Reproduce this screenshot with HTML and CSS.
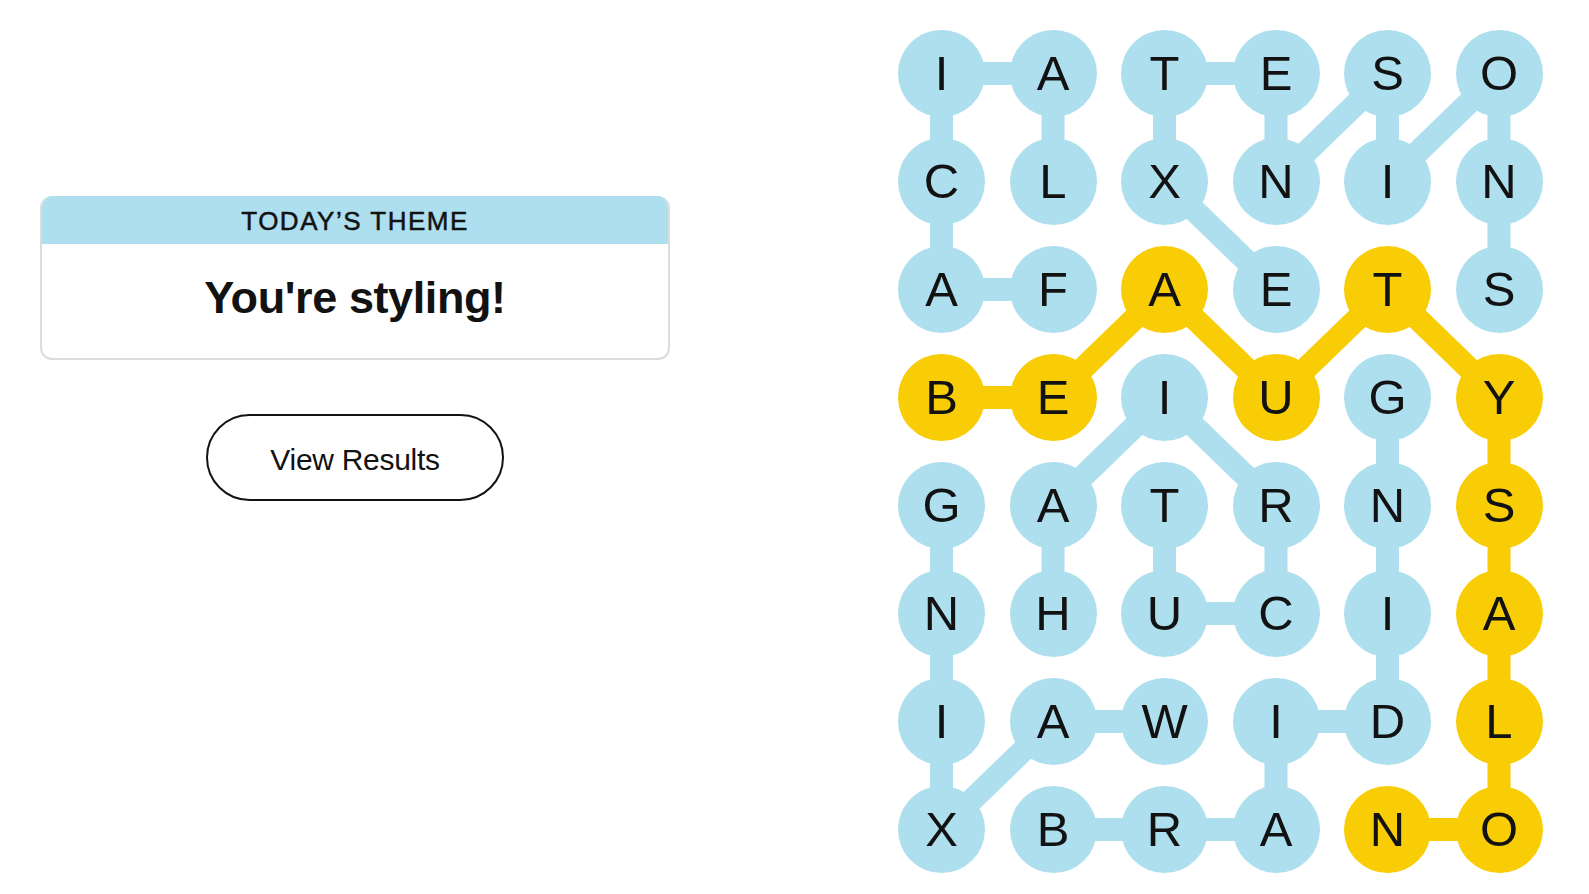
FILE: index.html
```html
<!DOCTYPE html>
<html lang="en">
<head>
<meta charset="utf-8">
<title>Strands</title>
<link rel="stylesheet" href="styles.css">
</head>
<body>
<main class="page">
  <section class="side">
    <div class="theme-card">
      <div class="theme-head">TODAY’S THEME</div>
      <div class="theme-body">You're styling!</div>
    </div>
    <button class="results-btn" type="button">View Results</button>
  </section>

  <section class="board">
    <svg class="links" width="645" height="843" viewBox="0 0 645 843" aria-hidden="true">
      <g class="blue">
        <!-- FACIAL -->
        <line x1="43.5" y1="43.5" x2="155" y2="43.5"/>
        <line x1="43.5" y1="43.5" x2="43.5" y2="151.5"/>
        <line x1="43.5" y1="151.5" x2="43.5" y2="259.5"/>
        <line x1="43.5" y1="259.5" x2="155" y2="259.5"/>
        <line x1="155" y1="43.5" x2="155" y2="151.5"/>
        <!-- EXTENSIONS -->
        <line x1="266.5" y1="43.5" x2="378" y2="43.5"/>
        <line x1="266.5" y1="43.5" x2="266.5" y2="151.5"/>
        <line x1="266.5" y1="151.5" x2="378" y2="259.5"/>
        <line x1="378" y1="43.5" x2="378" y2="151.5"/>
        <line x1="378" y1="151.5" x2="489.5" y2="43.5"/>
        <line x1="489.5" y1="43.5" x2="489.5" y2="151.5"/>
        <line x1="489.5" y1="151.5" x2="601" y2="43.5"/>
        <line x1="601" y1="43.5" x2="601" y2="151.5"/>
        <line x1="601" y1="151.5" x2="601" y2="259.5"/>
        <!-- HAIRCUT -->
        <line x1="266.5" y1="367.5" x2="155" y2="475.5"/>
        <line x1="266.5" y1="367.5" x2="378" y2="475.5"/>
        <line x1="155" y1="475.5" x2="155" y2="583.5"/>
        <line x1="266.5" y1="475.5" x2="266.5" y2="583.5"/>
        <line x1="266.5" y1="583.5" x2="378" y2="583.5"/>
        <line x1="378" y1="475.5" x2="378" y2="583.5"/>
        <!-- BRAIDING -->
        <line x1="489.5" y1="367.5" x2="489.5" y2="475.5"/>
        <line x1="489.5" y1="475.5" x2="489.5" y2="583.5"/>
        <line x1="489.5" y1="583.5" x2="489.5" y2="691.5"/>
        <line x1="489.5" y1="691.5" x2="378" y2="691.5"/>
        <line x1="378" y1="691.5" x2="378" y2="799.5"/>
        <line x1="378" y1="799.5" x2="266.5" y2="799.5"/>
        <line x1="266.5" y1="799.5" x2="155" y2="799.5"/>
        <!-- WAXING -->
        <line x1="43.5" y1="475.5" x2="43.5" y2="583.5"/>
        <line x1="43.5" y1="583.5" x2="43.5" y2="691.5"/>
        <line x1="43.5" y1="691.5" x2="43.5" y2="799.5"/>
        <line x1="43.5" y1="799.5" x2="155" y2="691.5"/>
        <line x1="155" y1="691.5" x2="266.5" y2="691.5"/>
      </g>
      <g class="gold">
        <!-- BEAUTYSALON -->
        <line x1="43.5" y1="367.5" x2="155" y2="367.5"/>
        <line x1="155" y1="367.5" x2="266.5" y2="259.5"/>
        <line x1="266.5" y1="259.5" x2="378" y2="367.5"/>
        <line x1="378" y1="367.5" x2="489.5" y2="259.5"/>
        <line x1="489.5" y1="259.5" x2="601" y2="367.5"/>
        <line x1="601" y1="367.5" x2="601" y2="475.5"/>
        <line x1="601" y1="475.5" x2="601" y2="583.5"/>
        <line x1="601" y1="583.5" x2="601" y2="691.5"/>
        <line x1="601" y1="691.5" x2="601" y2="799.5"/>
        <line x1="601" y1="799.5" x2="489.5" y2="799.5"/>
      </g>
    </svg>
    <div class="grid">
      <span class="cell">I</span><span class="cell">A</span><span class="cell">T</span><span class="cell">E</span><span class="cell">S</span><span class="cell">O</span>
      <span class="cell">C</span><span class="cell">L</span><span class="cell">X</span><span class="cell">N</span><span class="cell">I</span><span class="cell">N</span>
      <span class="cell">A</span><span class="cell">F</span><span class="cell gold">A</span><span class="cell">E</span><span class="cell gold">T</span><span class="cell">S</span>
      <span class="cell gold">B</span><span class="cell gold">E</span><span class="cell">I</span><span class="cell gold">U</span><span class="cell">G</span><span class="cell gold">Y</span>
      <span class="cell">G</span><span class="cell">A</span><span class="cell">T</span><span class="cell">R</span><span class="cell">N</span><span class="cell gold">S</span>
      <span class="cell">N</span><span class="cell">H</span><span class="cell">U</span><span class="cell">C</span><span class="cell">I</span><span class="cell gold">A</span>
      <span class="cell">I</span><span class="cell">A</span><span class="cell">W</span><span class="cell">I</span><span class="cell">D</span><span class="cell gold">L</span>
      <span class="cell">X</span><span class="cell">B</span><span class="cell">R</span><span class="cell">A</span><span class="cell gold">N</span><span class="cell gold">O</span>
    </div>
  </section>
</main>
</body>
</html>
```

FILE: styles.css
```css
* { box-sizing: border-box; }

html, body {
  margin: 0;
  padding: 0;
  background: #ffffff;
  color: #121212;
  font-family: "Liberation Sans", Arial, sans-serif;
}

.page {
  display: flex;
  align-items: flex-start;
  padding: 29.5px 0 0 40px;
  width: 1589px;
  height: 894px;
  overflow: hidden;
}

.side {
  width: 630px;
  padding-top: 166.5px;
  display: flex;
  flex-direction: column;
  align-items: center;
}

.theme-card {
  width: 100%;
  border: 2px solid #dcdcdc;
  border-top: none;
  border-radius: 12px;
  overflow: hidden;
}

.theme-head {
  background: #aedfee;
  height: 48px;
  margin: 0 -2px;
  display: flex;
  align-items: center;
  justify-content: center;
  font-size: 26px;
  font-weight: 400;
  -webkit-text-stroke: 0.5px #121212;
  letter-spacing: 1.5px;
  padding-top: 2px;
}

.theme-body {
  height: 114px;
  display: flex;
  align-items: center;
  justify-content: center;
  padding-bottom: 7px;
  font-size: 45px;
  font-weight: 700;
  letter-spacing: -0.4px;
}

.results-btn {
  margin-top: 54px;
  width: 298px;
  height: 87px;
  border: 2px solid #121212;
  border-radius: 44px;
  background: #ffffff;
  color: #121212;
  font-family: "Liberation Sans", Arial, sans-serif;
  font-size: 30px;
  letter-spacing: -0.3px;
  padding: 5px 0 0;
}

.board {
  position: relative;
  margin-left: 228px;
  width: 645px;
  height: 843px;
}

.links {
  position: absolute;
  left: 0;
  top: 0;
}

.links line {
  stroke-width: 23;
  stroke-linecap: butt;
}

.links .blue line { stroke: #aedfee; }
.links .gold line { stroke: #f8cd05; }

.grid {
  position: relative;
  display: grid;
  grid-template-columns: repeat(6, 87px);
  grid-auto-rows: 87px;
  column-gap: 24.5px;
  row-gap: 21px;
}

.cell {
  width: 87px;
  height: 87px;
  border-radius: 50%;
  background: #aedfee;
  display: flex;
  align-items: center;
  justify-content: center;
  font-size: 49px;
  line-height: 87px;
  color: #121212;
}

.cell.gold { background: #f8cd05; }
```
